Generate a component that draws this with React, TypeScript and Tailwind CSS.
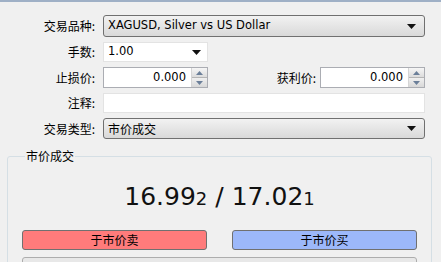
import React from 'react';

const cjk = { fontFamily: '"Noto Sans CJK SC", "DejaVu Sans", sans-serif' };
const latin = { fontFamily: '"DejaVu Sans", "Noto Sans CJK SC", sans-serif' };

function Arrow() {
    return (
        <svg width="9" height="5" viewBox="0 0 9 5" className="shrink-0">
            <path d="M0 0 H9 L4.5 5 Z" fill="#111" />
        </svg>
    );
}

function Label({ children }: { children: React.ReactNode }) {
    return <div className="w-[99px] shrink-0 pr-[4px] text-right text-[12px] text-black" style={cjk}>{children}</div>;
}

function Spinner() {
    return (
        <div className="flex h-full w-[16px] flex-col border-l border-[#d5d5d5]">
            <div className="flex flex-1 items-center justify-center bg-gradient-to-b from-[#f6f6f6] to-[#dcdcdc] border-b border-[#b5b5b5]">
                <svg width="7" height="4" viewBox="0 0 7 4"><path d="M0 4 L3.5 0 L7 4 Z" fill="#6b7f99" /></svg>
            </div>
            <div className="flex flex-1 items-center justify-center bg-gradient-to-b from-[#f0f0f0] to-[#d8d8d8]">
                <svg width="7" height="4" viewBox="0 0 7 4"><path d="M0 0 L3.5 4 L7 0 Z" fill="#6b7f99" /></svg>
            </div>
        </div>
    );
}

function NumberBox() {
    return (
        <div className="flex h-[21px] w-[105px] items-stretch border border-[#abadb3] bg-white">
            <div className="flex flex-1 items-center justify-end pr-[5px] text-[11.5px] text-black" style={latin}>0.000</div>
            <Spinner />
        </div>
    );
}

export default function App() {
    return (
        <div className="h-[262px] w-[441px] overflow-hidden bg-[#f0f0f0] border-t-2 border-[#9fb0c6]">
            <div className="flex flex-col gap-[5px] pt-[13px]">
                <div className="flex items-center gap-[4px]">
                    <Label>交易品种:</Label>
                    <div className="flex h-[22px] w-[322px] items-center justify-between rounded-[3px] border border-[#707070] bg-gradient-to-b from-[#f2f2f2] to-[#d9d9d9] pl-[4px] pr-[8px]">
                        <span className="text-[11.5px] text-black" style={latin}>XAGUSD, Silver vs US Dollar</span>
                        <Arrow />
                    </div>
                </div>
                <div className="flex items-center gap-[4px]">
                    <Label>手数:</Label>
                    <div className="flex h-[20px] w-[105px] items-center justify-between border border-[#e3e3e3] bg-white pl-[4px] pr-[6px]">
                        <span className="text-[11.5px] text-black" style={latin}>1.00</span>
                        <Arrow />
                    </div>
                </div>
                <div className="flex items-center gap-[4px]">
                    <Label>止损价:</Label>
                    <NumberBox />
                    <div className="ml-[56px] w-[48px] text-right text-[12px] text-black" style={cjk}>获利价:</div>
                    <NumberBox />
                </div>
                <div className="flex items-center gap-[4px]">
                    <Label>注释:</Label>
                    <div className="h-[20px] w-[322px] border border-[#e3e3e3] bg-white" />
                </div>
                <div className="flex items-center gap-[4px]">
                    <Label>交易类型:</Label>
                    <div className="flex h-[21px] w-[322px] items-center justify-between rounded-[3px] border border-[#707070] bg-gradient-to-b from-[#f2f2f2] to-[#d9d9d9] pl-[4px] pr-[8px]">
                        <span className="text-[12px] text-black" style={cjk}>市价成交</span>
                        <Arrow />
                    </div>
                </div>
            </div>
            <fieldset className="mx-[7px] mt-[8px] h-[130px] w-[425px] rounded-[3px] border border-[#d5dfe5] px-[14px]">
                <legend className="ml-[3px] px-[1px] text-[12px] text-black" style={cjk}>市价成交</legend>
                <div className="mt-[13px] flex items-baseline justify-center text-[25px] text-[#111]" style={latin}>
                    <span>16.99</span><span className="text-[18px]">2</span>
                    <span className="mx-[8px]">/</span>
                    <span>17.02</span><span className="text-[18px]">1</span>
                </div>
                <div className="mt-[14px] flex justify-between">
                    <div className="flex h-[20px] w-[185px] items-center justify-center rounded-[3px] border border-[#707070] bg-[#ff7b7b] text-[12px] text-black" style={cjk}>于市价卖</div>
                    <div className="flex h-[20px] w-[185px] items-center justify-center rounded-[3px] border border-[#707070] bg-[#9cb8fa] text-[12px] text-black" style={cjk}>于市价买</div>
                </div>
                <div className="mt-[7px] h-[10px] rounded-[3px] border border-[#adadad] bg-[#e8e8e8]" />
            </fieldset>
        </div>
    );
}
